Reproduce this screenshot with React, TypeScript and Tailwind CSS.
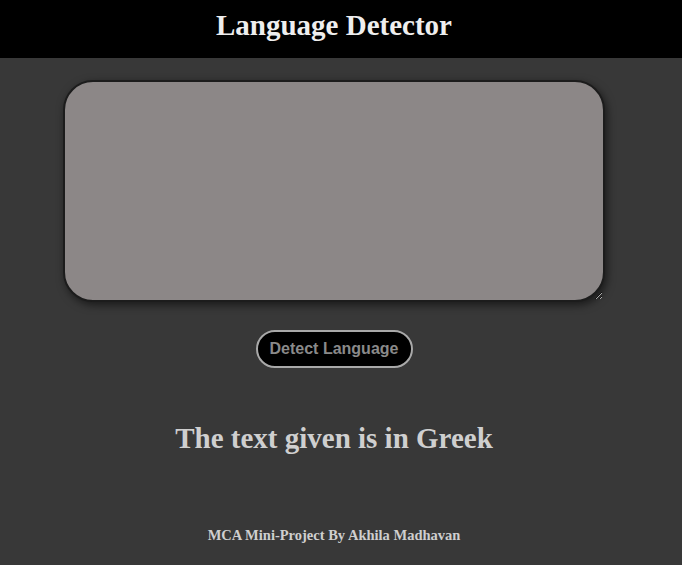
import React from "react";

export default function App() {
  return (
    <div className="min-h-[565px] w-full bg-[#383838] flex flex-col">
      <header className="h-[58px] bg-black flex items-center justify-center pr-[14px]">
        <h1 className="text-[29px] font-bold text-[#eeeeee] [font-family:'Liberation_Serif',serif] leading-none mb-[8px]">
          Language Detector
        </h1>
      </header>
      <div className="flex flex-col items-center pr-[14px]">
        <textarea
          className="mt-[22px] w-[542px] h-[222px] bg-[#8c8787] border-2 border-[#1c1c1c] rounded-[30px] shadow-[2px_3px_8px_rgba(0,0,0,0.55)] outline-none p-3"
        />
        <button className="mt-[28px] h-[38px] w-[157px] rounded-full bg-black border-2 border-[#a9a9a9] text-[#8a8a8a] font-bold text-[16px] [font-family:'Liberation_Sans',sans-serif]">
          Detect Language
        </button>
        <p className="mt-[56px] text-[29px] font-bold text-[#cfcfcf] [font-family:'Liberation_Serif',serif] leading-none">
          The text given is in Greek
        </p>
        <p className="mt-[75px] text-[14.5px] font-bold text-[#cfcfcf] [font-family:'Liberation_Serif',serif] leading-none">
          MCA Mini-Project By Akhila Madhavan
        </p>
      </div>
    </div>
  );
}
